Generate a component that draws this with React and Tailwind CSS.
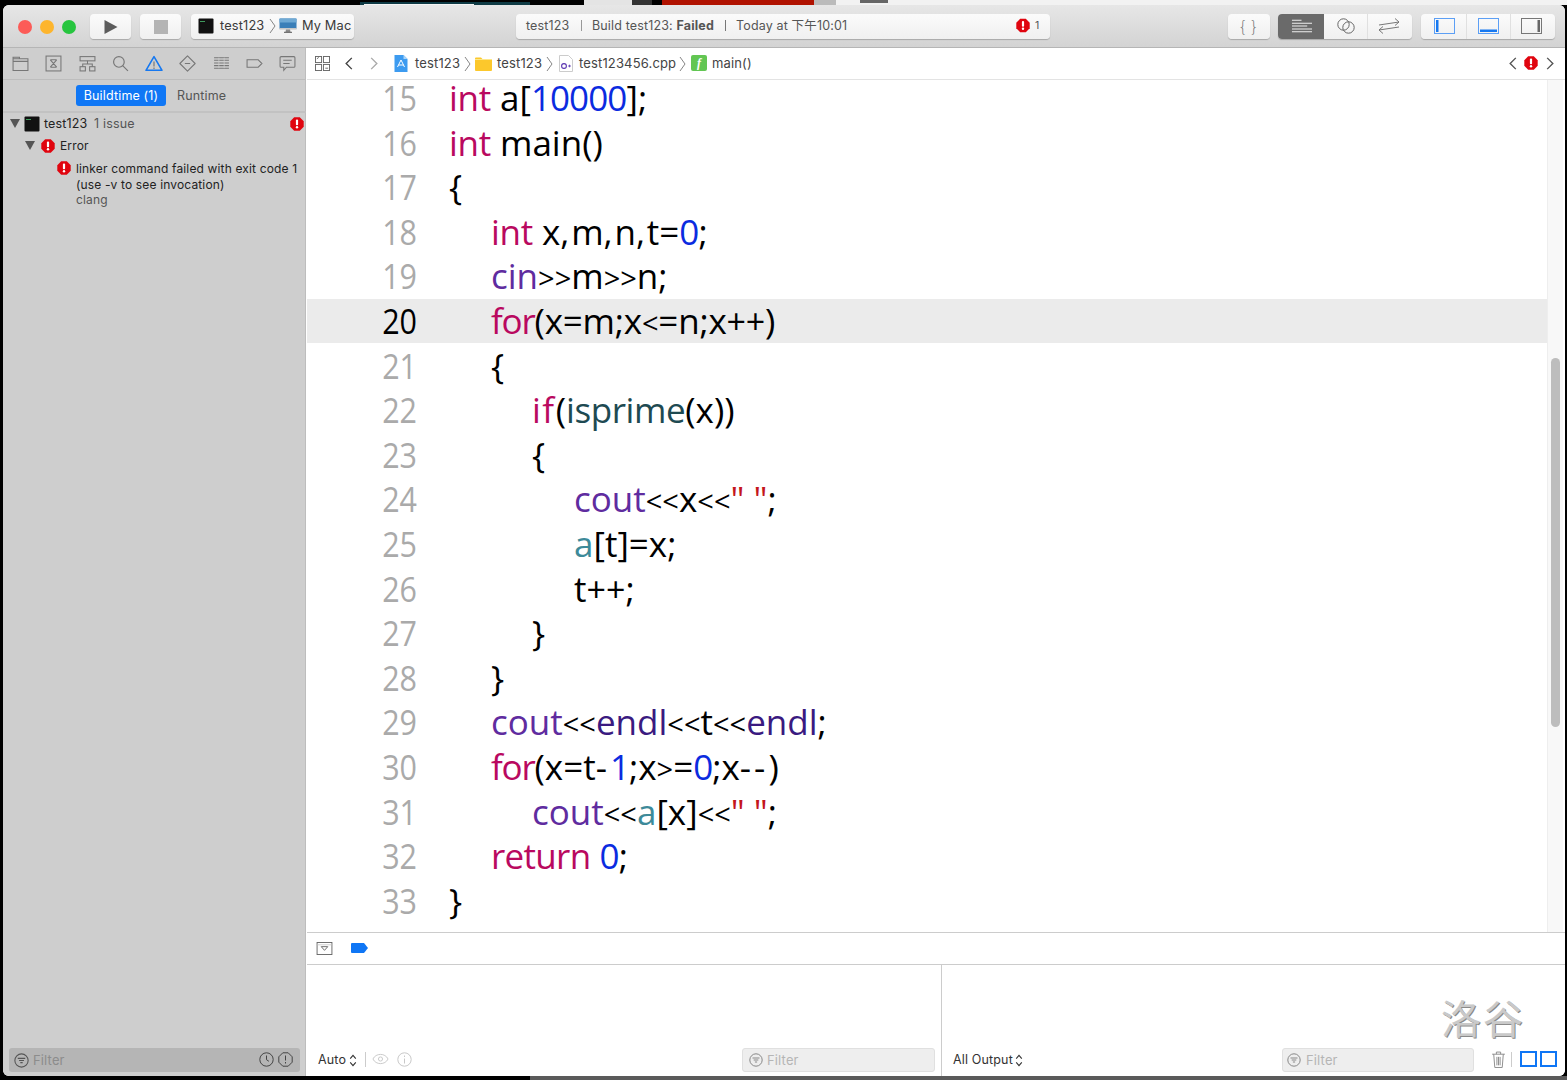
import React from "react";

const sp = {
  "<": "text-[29px]",
  ">": "text-[29px]",
  "-": "tracking-[3px]",
  ",": "tracking-[1.8px]",
  "+": "text-[34px]",
};
const F = ({ t }) => (
  <>
    {t.split("").map((c, i) => (sp[c] ? <span key={i} className={sp[c]}>{c}</span> : <React.Fragment key={i}>{c}</React.Fragment>))}
  </>
);
const K = ({ children }) => <span className="text-[#b9095f] tracking-[-0.3px]">{children}</span>;
const Kf = ({ children }) => <span className="text-[#b9095f] tracking-[-1.2px]">{children}</span>;
const Ki = ({ children }) => <span className="text-[#b9095f] tracking-[1.5px]">{children}</span>;
const Kr = ({ children }) => <span className="text-[#b9095f] tracking-[-0.7px]">{children}</span>;
const N = ({ children }) => <span className="text-[#0b2be0] tracking-[-0.9px]">{children}</span>;
const P = ({ children }) => <span className="text-[#5f2c9f]">{children}</span>;
const D = ({ children }) => <span className="text-[#3a1a80]">{children}</span>;
const T = ({ children }) => <span className="text-[#3d8a99]">{children}</span>;
const I = ({ children }) => <span className="text-[#1e4a52] tracking-[-0.4px]">{children}</span>;
const S = ({ children }) => <span className="text-[#c4161c]">{children}</span>;

const lines = [
  [15, "ml-0", <><K>int</K> a[<N>10000</N>];</>],
  [16, "ml-0", <><K>int</K> main()</>],
  [17, "ml-0", <>{"{"}</>],
  [18, "ml-[42px]", <><K>int</K> <F t="x,m,n,t=" /><N>0</N>;</>],
  [19, "ml-[42px]", <><P>cin</P><F t=">>m>>n;" /></>],
  [20, "ml-[42px]", <><Kf>for</Kf><span className="tracking-[-0.2px]"><F t="(x=m;x<=n;x++)" /></span></>],
  [21, "ml-[42px]", <>{"{"}</>],
  [22, "ml-[83px]", <><Ki>if</Ki>(<I>isprime</I>(x))</>],
  [23, "ml-[83px]", <>{"{"}</>],
  [24, "ml-[125px]", <><P>cout</P><F t="<<x<<" /><S>" "</S>;</>],
  [25, "ml-[125px]", <><T>a</T>[t]=x;</>],
  [26, "ml-[125px]", <><F t="t++;" /></>],
  [27, "ml-[83px]", <>{"}"}</>],
  [28, "ml-[42px]", <>{"}"}</>],
  [29, "ml-[42px]", <><P>cout</P><F t="<<" /><D>endl</D><F t="<<t<<" /><D>endl</D>;</>],
  [30, "ml-[42px]", <><Kf>for</Kf>(x=t<F t="-" /><N>1</N>;x<F t=">" />=<N>0</N>;x<F t="--" />)</>],
  [31, "ml-[83px]", <><P>cout</P><F t="<<" /><T>a</T>[x]<F t="<<" /><S>" "</S>;</>],
  [32, "ml-[42px]", <><Kr>return</Kr> <N>0</N>;</>],
  [33, "ml-0", <>{"}"}</>],
];

const ErrorBadge = ({ className }) => (
  <svg viewBox="0 0 14 14" className={className}>
    <path d="M4.2 0.3h5.6l3.9 3.9v5.6l-3.9 3.9H4.2L0.3 9.8V4.2z" fill="#e0050f" />
    <rect x="5.9" y="2.6" width="2.2" height="5.6" rx="1" fill="#fff" />
    <circle cx="7" cy="10.3" r="1.2" fill="#fff" />
  </svg>
);

const Terminal = ({ className }) => (
  <svg viewBox="0 0 16 16" className={className}>
    <rect x="0.5" y="0.5" width="15" height="15" rx="1" fill="#111" />
    <rect x="2" y="3" width="5" height="1" fill="#3f9a5c" />
  </svg>
);

const Chev = ({ className }) => (
  <svg viewBox="0 0 7 16" className={className} fill="none" stroke="#777" strokeWidth="0.9">
    <path d="M1 1l5 7-5 7" />
  </svg>
);

const Arrow = ({ dir, className, color }) => (
  <svg viewBox="0 0 10 16" className={className} fill="none" stroke={color} strokeWidth="1.5">
    <path d={dir === "l" ? "M8 2L2 8l6 6" : "M2 2l6 6-6 6"} />
  </svg>
);

const Updown = ({ className }) => (
  <svg viewBox="0 0 8 14" className={className} fill="none" stroke="#333" strokeWidth="1.2">
    <path d="M1 5l3-3.5L7 5M1 9l3 3.5L7 9" />
  </svg>
);

const Tri = ({ className }) => (
  <svg viewBox="0 0 10 9" className={className}><path d="M0 0h10L5 9z" fill="#555" /></svg>
);

const FilterIcon = ({ className, color }) => (
  <svg viewBox="0 0 14 14" className={className} fill="none" stroke={color} strokeWidth="1">
    <circle cx="7" cy="7" r="6.2" />
    <path d="M3.5 5h7M4.7 7h4.6M5.9 9h2.2" strokeWidth="1.1" />
  </svg>
);

const Btn = ({ className, children }) => (
  <div className={"absolute top-[14px] h-[25px] rounded-[4px] bg-gradient-to-b from-[#fbfbfb] to-[#f0f0f0] shadow-[0_1px_1px_rgba(0,0,0,0.22)] flex items-center " + className}>{children}</div>
);

const navIcon = "absolute top-[55px] w-[17px] h-[17px]";

export default function App() {
  return (
    <div className="relative w-[1567px] h-[1080px] overflow-hidden bg-black tracking-[0.15px] [font-family:Inter,Noto_Sans_CJK_SC,sans-serif]">
      {/* desktop strips */}
      <div className="absolute left-[360px] top-[2px] w-[170px] h-[3px] bg-[#0e3a44]" />
      <div className="absolute left-[364px] top-[4px] w-[110px] h-[1px] bg-[#f4f4f4]" />
      <div className="absolute left-[584px] top-0 w-[48px] h-[5px] bg-[#e4e4e4]" />
      <div className="absolute left-[632px] top-0 w-[20px] h-[5px] bg-[#333]" />
      <div className="absolute left-[662px] top-0 w-[152px] h-[5px] bg-[#b01200]" />
      <div className="absolute left-[814px] top-0 w-[22px] h-[5px] bg-[#bbb]" />
      <div className="absolute left-[836px] top-0 w-[184px] h-[5px] bg-[#f2f2f2]" />
      <div className="absolute left-[860px] top-0 w-[28px] h-[3px] bg-[#666]" />
      <div className="absolute left-[1020px] top-0 w-[547px] h-[5px] bg-[#f2f2f2]" />
      <div className="absolute left-[530px] top-[1076px] w-[1037px] h-[4px] bg-[#5a5a5a]" />

      {/* window */}
      <div className="absolute left-[3px] top-[5px] w-[1562px] h-[1071px] rounded-[6px] overflow-hidden bg-white">
        <div className="absolute inset-0 -translate-x-[3px] -translate-y-[5px] w-[1567px] h-[1080px]">
          {/* title bar */}
          <div className="absolute left-0 top-0 w-[1567px] h-[48px] bg-gradient-to-b from-[#e9e9e9] to-[#d3d3d3] border-b border-[#b5b5b5]" />
          <div className="absolute left-[18px] top-[20px] w-[14px] h-[14px] rounded-full bg-[#fc5b57]" />
          <div className="absolute left-[40px] top-[20px] w-[14px] h-[14px] rounded-full bg-[#fdb52d]" />
          <div className="absolute left-[62px] top-[20px] w-[14px] h-[14px] rounded-full bg-[#27c53f]" />

          <Btn className="left-[90px] w-[41px] justify-center">
            <svg viewBox="0 0 14 14" className="w-[14px] h-[14px]"><path d="M0.5 0v14L13.5 7z" fill="#5c5c5c" /></svg>
          </Btn>
          <Btn className="left-[140px] w-[41px] justify-center">
            <div className="w-[14px] h-[14px] bg-[#b4b4b4]" />
          </Btn>
          <Btn className="left-[191px] w-[163px] text-[12.8px] text-[#3a3a3a]">
            <Terminal className="absolute left-[7px] top-[4px] w-[16px] h-[16px]" />
            <span className="absolute left-[29px] top-[4px] leading-[16px]">test123</span>
            <Chev className="absolute left-[78px] top-[4px] w-[7px] h-[16px]" />
            <svg viewBox="0 0 18 16" className="absolute left-[88px] top-[3px] w-[18px] h-[17px]">
              <rect x="0.5" y="1" width="17" height="10.5" rx="0.8" fill="#3b7fb8" />
              <rect x="0.5" y="1" width="17" height="4" fill="#6fa9d4" />
              <rect x="0.5" y="10.5" width="17" height="1.6" fill="#c8c8c8" />
              <path d="M7 12h4l.5 2.5h-5z" fill="#8c8c8c" />
              <rect x="5" y="14.3" width="8" height="1" fill="#555" />
            </svg>
            <span className="absolute left-[111px] top-[4px] leading-[16px]">My Mac</span>
          </Btn>

          <Btn className="left-[516px] w-[534px] text-[12.5px] text-[#555]">
            <span className="absolute left-[10px] top-[4px] leading-[16px]">test123</span>
            <div className="absolute left-[65px] top-[6px] w-px h-[11px] bg-[#999]" />
            <span className="absolute left-[76px] top-[4px] leading-[16px]">Build test123: <b className="font-bold">Failed</b></span>
            <div className="absolute left-[209px] top-[6px] w-px h-[11px] bg-[#777]" />
            <span className="absolute left-[220px] top-[4px] leading-[16px]">Today at 下午10:01</span>
            <ErrorBadge className="absolute left-[500px] top-[4px] w-[14px] h-[15px]" />
            <span className="absolute left-[519px] top-[5px] text-[10.5px] leading-[14px]">1</span>
          </Btn>

          <Btn className="left-[1228px] w-[42px] justify-center">
            <span className="text-[16px] leading-[20px] text-[#777] [font-family:DejaVu_Sans,sans-serif] font-light tracking-[1px]">{"{}"}</span>
          </Btn>
          <Btn className="left-[1278px] w-[134px]">
            <div className="absolute left-0 top-0 w-[46px] h-[25px] rounded-l-[4px] bg-[#6a6a6a] flex items-center justify-center">
              <svg viewBox="0 0 22 16" className="w-[21px] h-[16px]" stroke="#eee" strokeWidth="1.1">
                <path d="M1 1h10M1 4h21M1 7h16M1 10h21M1 13h21" />
              </svg>
            </div>
            <svg viewBox="0 0 20 16" className="absolute left-[58px] top-[4px] w-[20px] h-[16px]" fill="none" stroke="#666" strokeWidth="1">
              <circle cx="7.5" cy="6.5" r="5.7" /><circle cx="12.5" cy="9.5" r="5.7" />
            </svg>
            <div className="absolute left-[89px] top-0 w-px h-[25px] bg-[#e0e0e0]" />
            <svg viewBox="0 0 22 16" className="absolute left-[100px] top-[4px] w-[22px] h-[16px]" fill="none" stroke="#777" strokeWidth="1">
              <path d="M5 8.5L1 12l4 3.5M1 12l20-3M17 .5l4 3.5-4 3.5M21 4L1 7" />
            </svg>
          </Btn>
          <Btn className="left-[1421px] w-[134px]">
            <svg viewBox="0 0 21 16" className="absolute left-[13px] top-[4px] w-[21px] h-[16px]" fill="none">
              <rect x="0.5" y="0.5" width="20" height="15" stroke="#5c9ff5" />
              <rect x="2" y="2" width="2.5" height="12" fill="#1678f0" />
            </svg>
            <div className="absolute left-[45px] top-0 w-px h-[25px] bg-[#e0e0e0]" />
            <svg viewBox="0 0 21 16" className="absolute left-[57px] top-[4px] w-[21px] h-[16px]" fill="none">
              <rect x="0.5" y="0.5" width="20" height="15" stroke="#5c9ff5" />
              <rect x="2" y="11.5" width="17" height="2.5" fill="#1678f0" />
            </svg>
            <div className="absolute left-[89px] top-0 w-px h-[25px] bg-[#e0e0e0]" />
            <svg viewBox="0 0 21 16" className="absolute left-[100px] top-[4px] w-[21px] h-[16px]" fill="none">
              <rect x="0.5" y="0.5" width="20" height="15" stroke="#777" />
              <rect x="16.5" y="2" width="2.5" height="12" fill="#666" />
            </svg>
          </Btn>

          {/* sidebar */}
          <div className="absolute left-0 top-[48px] w-[306px] h-[1032px] bg-[#cecece] border-r border-[#bdbdbd]" />
          <div className="absolute left-0 top-[79px] w-[306px] h-px bg-[#bdbdbd]" />
          <div className="absolute left-0 top-[111px] w-[306px] h-[2px] bg-[#c2c2c2]" />

          <svg viewBox="0 0 16 14" className={navIcon + " left-[12px]"} fill="none" stroke="#777"><path d="M1 2.5h14v11H1zM1 5h14M1 2.5V1.2h6v1.3" /></svg>
          <svg viewBox="0 0 16 16" className={navIcon + " left-[45px]"} fill="none" stroke="#777"><rect x="1" y="1" width="14" height="14" /><path d="M5 4.5l6 7M11 4.5l-6 7M5 4.5h6M5 11.5h6" /></svg>
          <svg viewBox="0 0 16 16" className={navIcon + " left-[79px]"} fill="none" stroke="#777"><rect x="1" y="1.5" width="14" height="4" /><rect x="1" y="11" width="5" height="4" /><rect x="10" y="11" width="5" height="4" /><path d="M3.5 11V8.5h9V11M8 5.5v3" /></svg>
          <svg viewBox="0 0 16 16" className={navIcon + " left-[112px]"} fill="none" stroke="#777" strokeWidth="1.1"><circle cx="6.5" cy="6.5" r="5" /><path d="M10 10l5 5" /></svg>
          <svg viewBox="0 0 18 16" className="absolute left-[145px] top-[55px] w-[18px] h-[17px]" fill="none" stroke="#1678f0" strokeWidth="1.6"><path d="M9 1.2L1 14.8h16z" strokeLinejoin="round" /><path d="M9 6v5" stroke="#777" strokeWidth="1.2" /><path d="M9 12v1.4" stroke="#777" strokeWidth="1.2" /></svg>
          <svg viewBox="0 0 16 16" className={navIcon + " left-[179px]"} fill="none" stroke="#777"><path d="M8 .8L15.2 8 8 15.2.8 8z" strokeLinejoin="round" /><path d="M5.5 8h5" /></svg>
          <svg viewBox="0 0 16 16" className={navIcon + " left-[213px]"} fill="none" stroke="#777" strokeWidth="1"><path d="M1 2.5h14M1 5h14M1 7.5h14M1 10h14M1 12.5h14" /><path d="M5.5 2.5v10M10.5 2.5v10" stroke="#cecece" strokeWidth="0.7" /></svg>
          <svg viewBox="0 0 16 16" className={navIcon + " left-[246px]"} fill="none" stroke="#777"><path d="M1 4.5h10.5L15 8l-3.5 3.5H1z" /></svg>
          <svg viewBox="0 0 16 16" className={navIcon + " left-[279px]"} fill="none" stroke="#777"><path d="M2 1.5h12a1 1 0 011 1v8a1 1 0 01-1 1H7l-2.5 3v-3H2a1 1 0 01-1-1v-8a1 1 0 011-1zM4 5h8M4 8h6" /></svg>

          <div className="absolute left-[76px] top-[85px] w-[90px] h-[21px] rounded-[3px] bg-[#1077f5] text-white text-[12.5px] leading-[21px] text-center">Buildtime (1)</div>
          <div className="absolute left-[177px] top-[85px] text-[12.5px] leading-[21px] text-[#555]">Runtime</div>

          <Tri className="absolute left-[10px] top-[119px] w-[10px] h-[9px]" />
          <Terminal className="absolute left-[24px] top-[116px] w-[16px] h-[16px]" />
          <div className="absolute left-[44px] top-[115px] text-[12.5px] leading-[17px] text-[#222]">test123 <span className="text-[#555] ml-[3px]">1 issue</span></div>
          <ErrorBadge className="absolute left-[290px] top-[117px] w-[14px] h-[14px]" />
          <Tri className="absolute left-[25px] top-[141px] w-[10px] h-[9px]" />
          <ErrorBadge className="absolute left-[41px] top-[139px] w-[14px] h-[14px]" />
          <div className="absolute left-[60px] top-[137px] text-[12px] leading-[17px] text-[#222]">Error</div>
          <ErrorBadge className="absolute left-[57px] top-[161px] w-[14px] h-[14px]" />
          <div className="absolute left-[76px] top-[161px] w-[228px] text-[12px] leading-[15.5px] text-[#222]">
            <div className="whitespace-nowrap">linker command failed with exit code 1</div>
            <div className="whitespace-nowrap">(use -v to see invocation)</div>
            <div className="text-[#555]">clang</div>
          </div>

          <div className="absolute left-[9px] top-[1048px] w-[291px] h-[24px] rounded-[3px] bg-[#b5b5b5]" />
          <FilterIcon color="#555" className="absolute left-[14px] top-[1053px] w-[15px] h-[15px]" />
          <div className="absolute left-[33px] top-[1052px] text-[13px] leading-[16px] text-[#8c8c8c]">Filter</div>
          <svg viewBox="0 0 15 15" className="absolute left-[259px] top-[1052px] w-[15px] h-[15px]" fill="none" stroke="#444"><circle cx="7.5" cy="7.5" r="6.7" /><path d="M7.5 3.5v4.2l2.4 1.6" /></svg>
          <svg viewBox="0 0 15 15" className="absolute left-[278px] top-[1052px] w-[15px] h-[15px]" fill="none" stroke="#444"><path d="M4.8.8h5.4l4 4v5.4l-4 4H4.8l-4-4V4.8z" /><path d="M7.5 3.5v5M7.5 10v1.5" /></svg>

          {/* jump bar */}
          <div className="absolute left-[307px] top-[48px] w-[1260px] h-[32px] bg-white border-b border-[#e3e3e3]" />
          <svg viewBox="0 0 16 16" className="absolute left-[315px] top-[56px] w-[15px] h-[15px]" fill="none" stroke="#666"><rect x="0.5" y="0.5" width="6.5" height="6.5" /><rect x="9" y="0.5" width="6.5" height="6.5" /><rect x="0.5" y="9" width="6.5" height="6.5" /><rect x="9" y="9" width="6.5" height="6.5" /><path d="M2 3l2-1.5M11 13h3" /></svg>
          <Arrow dir="l" color="#444" className="absolute left-[344px] top-[56px] w-[10px] h-[15px]" />
          <Arrow dir="r" color="#aaa" className="absolute left-[369px] top-[56px] w-[10px] h-[15px]" />
          <svg viewBox="0 0 14 17" className="absolute left-[394px] top-[55px] w-[14px] h-[17px]">
            <path d="M0.5 0h9L13.5 4v13H0.5z" fill="#3d9bf0" />
            <path d="M9.5 0L13.5 4h-4z" fill="#a9d4f8" />
            <path d="M7 5l3.5 7M7 5l-3.5 7M4.5 10h5" stroke="#fff" strokeWidth="1" fill="none" />
          </svg>
          <div className="absolute left-[415px] top-[55px] text-[13px] leading-[16px] text-[#444]">test123</div>
          <Chev className="absolute left-[464px] top-[56px] w-[7px] h-[16px]" />
          <svg viewBox="0 0 17 14" className="absolute left-[475px] top-[57px] w-[17px] h-[14px]">
            <path d="M0 1.5a1 1 0 011-1h5l1.5 1.5H16a1 1 0 011 1V13a1 1 0 01-1 1H1a1 1 0 01-1-1z" fill="#fcc82c" />
            <rect x="0" y="2" width="17" height="1" fill="#fde78a" />
          </svg>
          <div className="absolute left-[497px] top-[55px] text-[13px] leading-[16px] text-[#444]">test123</div>
          <Chev className="absolute left-[546px] top-[56px] w-[7px] h-[16px]" />
          <svg viewBox="0 0 14 17" className="absolute left-[559px] top-[55px] w-[14px] h-[17px]">
            <path d="M0.5 0.5h9L13.5 4.5v12H0.5z" fill="#fff" stroke="#ccc" />
            <circle cx="5" cy="11" r="2.4" fill="none" stroke="#5a34b0" strokeWidth="1.1" />
            <path d="M9 11h3M10.5 9.7v2.6" stroke="#5a34b0" strokeWidth="0.8" />
          </svg>
          <div className="absolute left-[579px] top-[55px] text-[13px] leading-[16px] text-[#444]">test123456.cpp</div>
          <Chev className="absolute left-[679px] top-[56px] w-[7px] h-[16px]" />
          <div className="absolute left-[691px] top-[55px] w-[16px] h-[16px] rounded-[2px] bg-[#62c653] flex items-center justify-center text-white text-[12px] italic font-bold [font-family:Liberation_Serif,serif] leading-[16px]">f</div>
          <div className="absolute left-[712px] top-[55px] text-[13px] leading-[16px] text-[#444]">main()</div>
          <Arrow dir="l" color="#555" className="absolute left-[1508px] top-[56px] w-[10px] h-[15px]" />
          <ErrorBadge className="absolute left-[1524px] top-[56px] w-[14px] h-[14px]" />
          <Arrow dir="r" color="#555" className="absolute left-[1545px] top-[56px] w-[10px] h-[15px]" />

          {/* editor */}
          <div className="absolute left-[307px] top-[80px] w-[1260px] h-[852px] bg-white">
            <div className="absolute left-0 top-[219px] w-[1240px] h-[44px] bg-[#ebebeb]" />
            <div className="absolute left-0 top-[-4px] w-[1240px] text-[35px] leading-[44.6px] tracking-normal [font-family:Open_Sans,sans-serif] whitespace-pre">
              {lines.map(([n, ml, code]) => (
                <div key={n} className="flex h-[44.6px]">
                  <div className={"w-[110px] text-right origin-right scale-x-[0.87] " + (n === 20 ? "text-black" : "text-[#aaaaaa]")}>{n}</div>
                  <div className="text-black ml-[32px]">
                    <div className={ml}>{code}</div>
                  </div>
                </div>
              ))}
            </div>
            <div className="absolute left-[1240px] top-0 w-[16px] h-[852px] bg-[#f8f8f8] border-l border-[#eeeeee]" />
            <div className="absolute left-[1244px] top-[278px] w-[9px] h-[369px] rounded-full bg-[#bdbdbd]" />
          </div>

          {/* debug bar */}
          <div className="absolute left-[307px] top-[932px] w-[1260px] h-[33px] bg-white border-y border-[#cccccc]" />
          <svg viewBox="0 0 17 14" className="absolute left-[316px] top-[942px] w-[17px] h-[13px]" fill="none" stroke="#666"><rect x="0.5" y="0.5" width="16" height="13" /><path d="M1 3h15" stroke="#ccc" /><path d="M5 5h7L8.5 9z" /></svg>
          <svg viewBox="0 0 17 10" className="absolute left-[351px] top-[943px] w-[17px] h-[10px]"><path d="M1 0h12l4 5-4 5H1a1 1 0 01-1-1V1a1 1 0 011-1z" fill="#0f76f5" /></svg>

          {/* console */}
          <div className="absolute left-[307px] top-[965px] w-[1260px] h-[111px] bg-white" />
          <div className="absolute left-[941px] top-[965px] w-px h-[111px] bg-[#cccccc]" />
          <div className="absolute left-[318px] top-[1052px] text-[12.5px] leading-[16px] text-[#333]">Auto</div>
          <Updown className="absolute left-[349px] top-[1054px] w-[8px] h-[13px]" />
          <div className="absolute left-[365px] top-[1052px] w-px h-[15px] bg-[#ccc]" />
          <svg viewBox="0 0 18 12" className="absolute left-[372px] top-[1053px] w-[17px] h-[12px]" fill="none" stroke="#c8c8c8"><path d="M1 6c3-6.5 13-6.5 16 0-3 6.5-13 6.5-16 0z" /><circle cx="9" cy="6" r="2.2" /></svg>
          <svg viewBox="0 0 15 15" className="absolute left-[397px] top-[1052px] w-[15px] h-[15px]" fill="none" stroke="#c8c8c8"><circle cx="7.5" cy="7.5" r="6.7" /><path d="M7.5 6.5v5M7.5 3.5v1.5" /></svg>

          <div className="absolute left-[742px] top-[1048px] w-[193px] h-[24px] rounded-[3px] bg-[#eeeeee] border border-[#e0e0e0]" />
          <FilterIcon color="#888" className="absolute left-[749px] top-[1053px] w-[14px] h-[14px]" />
          <div className="absolute left-[767px] top-[1052px] text-[13px] leading-[16px] text-[#b5b5b5]">Filter</div>

          <div className="absolute left-[953px] top-[1052px] text-[12.5px] leading-[16px] text-[#333]">All Output</div>
          <Updown className="absolute left-[1015px] top-[1054px] w-[8px] h-[13px]" />

          <div className="absolute left-[1441px] top-[990px] text-[40px] leading-[54px] tracking-[2px] text-[#c9c9c9] [font-family:Noto_Sans_CJK_SC,sans-serif] font-normal [text-shadow:1px_1px_0_#8a8a8a]">洛谷</div>

          <div className="absolute left-[1282px] top-[1048px] w-[192px] h-[24px] rounded-[3px] bg-[#eeeeee] border border-[#e0e0e0]" />
          <FilterIcon color="#888" className="absolute left-[1287px] top-[1053px] w-[14px] h-[14px]" />
          <div className="absolute left-[1306px] top-[1052px] text-[13px] leading-[16px] text-[#b5b5b5]">Filter</div>
          <svg viewBox="0 0 14 16" className="absolute left-[1491px] top-[1051px] w-[15px] h-[17px]" fill="none" stroke="#8a8a8a"><path d="M1 3h12M5 3V1h4v2M2.5 3l1 12.5h7l1-12.5M5.5 5.5v8M7 5.5v8M8.5 5.5v8" strokeWidth="0.9" /></svg>
          <div className="absolute left-[1511px] top-[1052px] w-px h-[15px] bg-[#ccc]" />
          <div className="absolute left-[1520px] top-[1051px] w-[17px] h-[16px] border-2 border-[#0f76f5] bg-white" />
          <div className="absolute left-[1540px] top-[1051px] w-[17px] h-[16px] border-2 border-[#0f76f5] bg-white" />
        </div>
      </div>
    </div>
  );
}
